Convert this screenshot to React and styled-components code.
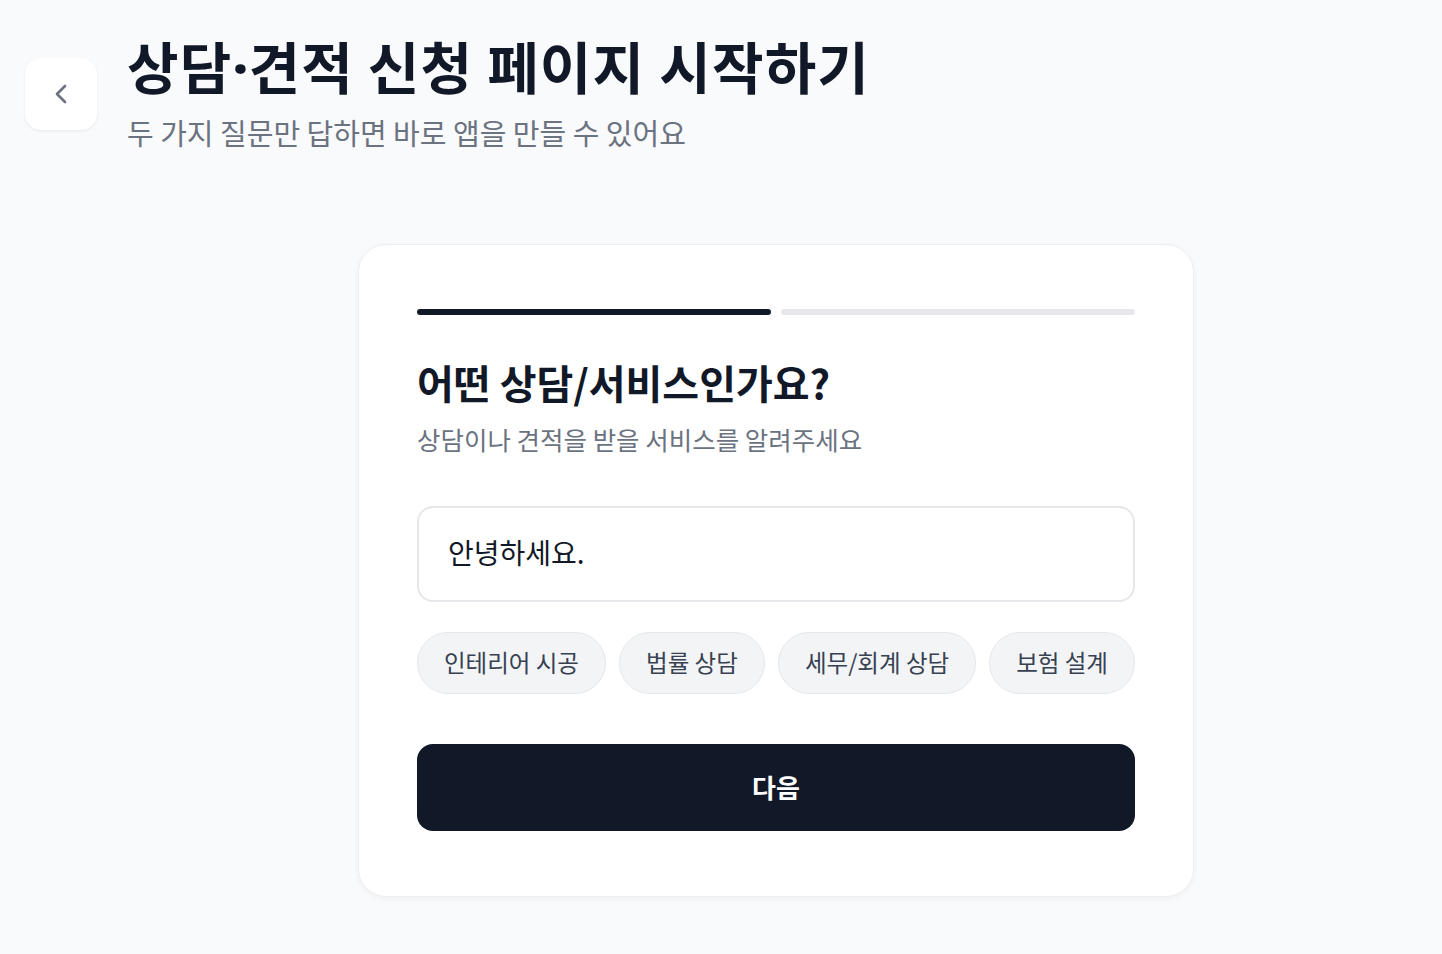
import React, { useState } from "react";
import styled, { createGlobalStyle } from "styled-components";
import { ChevronLeft } from "lucide-react";

const GlobalStyle = createGlobalStyle`
  body {
    margin: 0;
    background: #f9fafb;
    font-family: "Noto Sans CJK KR", "Noto Sans", sans-serif;
    color: #111827;
  }
  * {
    box-sizing: border-box;
  }
`;

const Page = styled.div`
  min-height: 954px;
  display: grid;
  grid-template-columns: 72px 1fr;
  column-gap: 30px;
  padding: 31px 17px 40px 25px;
`;

const BackButton = styled.button`
  width: 72px;
  height: 72px;
  margin-top: 27px;
  display: flex;
  align-items: center;
  justify-content: center;
  background: #fff;
  border: none;
  border-radius: 16px;
  box-shadow: 0 1px 3px rgba(17, 24, 39, 0.08);
  color: #6b7280;
  cursor: pointer;
`;

const Main = styled.main`
  display: flex;
  flex-direction: column;
`;

const Title = styled.h1`
  margin: 0;
  font-size: 56px;
  line-height: 67px;
  font-weight: 700;
  letter-spacing: 1.2px;
  color: #111827;
`;

const Dot = styled.span`
  font-family: "Noto Sans", sans-serif;
  font-weight: 800;
  letter-spacing: 0;
`;

const Subtitle = styled.p`
  margin: 13px 0 0;
  font-size: 29px;
  line-height: 36px;
  color: #6b7280;
`;

const Card = styled.section`
  align-self: center;
  width: 836px;
  margin-top: 94px;
  padding: 64px 58px 65px;
  background: #fff;
  border: 1px solid #eceef1;
  border-radius: 28px;
  box-shadow: 0 2px 6px rgba(17, 24, 39, 0.04);
`;

const Progress = styled.div`
  display: flex;
  gap: 10px;
`;

const Step = styled.div`
  flex: 1;
  height: 6px;
  border-radius: 3px;
  background: ${({ $done }) => ($done ? "#111827" : "#e5e7eb")};
`;

const Question = styled.h2`
  margin: 39px 0 0;
  font-size: 40px;
  line-height: 56px;
  font-weight: 700;
  letter-spacing: 0;
`;

const Hint = styled.p`
  margin: 12px 0 0;
  font-size: 25.5px;
  line-height: 34px;
  color: #6b7280;
`;

const Input = styled.input`
  display: block;
  width: 100%;
  height: 96px;
  margin-top: 50px;
  padding: 0 29px 4px;
  border: 2px solid #e5e7eb;
  border-radius: 16px;
  font-family: inherit;
  font-size: 28px;
  color: #111827;
  outline: none;
`;

const Chips = styled.div`
  display: flex;
  justify-content: space-between;
  margin-top: 30px;
`;

const Chip = styled.button`
  height: 62px;
  padding: 0 26px 3px;
  border: 1px solid #e5e7eb;
  border-radius: 31px;
  background: #f3f4f6;
  font-family: inherit;
  font-size: 23.5px;
  color: #374151;
  cursor: pointer;
`;

const NextButton = styled.button`
  display: block;
  width: 100%;
  height: 87px;
  margin-top: 50px;
  padding-bottom: 3px;
  border: none;
  border-radius: 16px;
  background: #111827;
  color: #fff;
  font-family: inherit;
  font-size: 26px;
  font-weight: 700;
  cursor: pointer;
`;

const suggestions = ["인테리어 시공", "법률 상담", "세무/회계 상담", "보험 설계"];

export default function App() {
  const [value, setValue] = useState("안녕하세요.");

  return (
    <>
      <GlobalStyle />
      <Page>
        <BackButton type="button" aria-label="뒤로">
          <ChevronLeft size={32} strokeWidth={2} />
        </BackButton>
        <Main>
          <Title>
            상담<Dot>·</Dot>견적 신청 페이지 시작하기
          </Title>
          <Subtitle>두 가지 질문만 답하면 바로 앱을 만들 수 있어요</Subtitle>
          <Card>
            <Progress>
              <Step $done />
              <Step />
            </Progress>
            <Question>어떤 상담/서비스인가요?</Question>
            <Hint>상담이나 견적을 받을 서비스를 알려주세요</Hint>
            <Input value={value} onChange={(e) => setValue(e.target.value)} />
            <Chips>
              {suggestions.map((s) => (
                <Chip key={s} type="button" onClick={() => setValue(s)}>
                  {s}
                </Chip>
              ))}
            </Chips>
            <NextButton type="button">다음</NextButton>
          </Card>
        </Main>
      </Page>
    </>
  );
}
